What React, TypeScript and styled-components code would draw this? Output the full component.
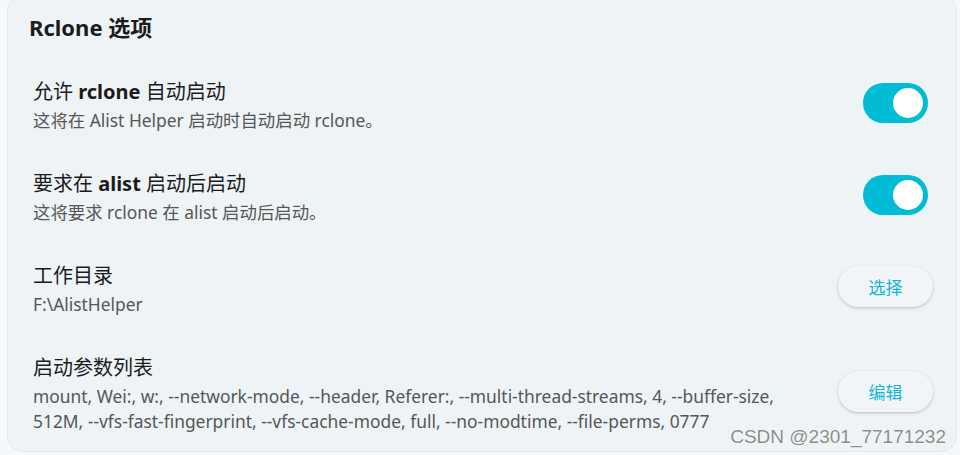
import styled, { createGlobalStyle } from "styled-components";

const GlobalStyle = createGlobalStyle`
  html, body {
    margin: 0;
    padding: 0;
    background: #f6f9fb;
    font-family: "Noto Sans", "Noto Sans CJK SC", sans-serif;
    overflow: hidden;
  }
`;

const Page = styled.div`
  position: relative;
  width: 960px;
  height: 455px;
  padding: 0 3px 0 7px;
  box-sizing: border-box;
  overflow: hidden;
`;

const Card = styled.section`
  margin-top: -6px;
  height: 458px;
  box-sizing: border-box;
  background: #eef3f6;
  border: 1px solid #e4e9ed;
  border-radius: 16px;
  padding: 17px 23px 18px 21px;
  display: flex;
  flex-direction: column;
  gap: 36px;
`;

const CardTitle = styled.h2`
  margin: 0;
  font-size: 22px;
  line-height: 30px;
  font-weight: 700;
  color: #1b1b1b;
`;

const List = styled.div`
  display: flex;
  flex-direction: column;
  gap: 37px;
  padding-left: 4px;
`;

const Row = styled.div`
  display: flex;
  align-items: center;
  justify-content: space-between;
  gap: 30px;
`;

const Text = styled.div`
  flex: 1;
  min-width: 0;
`;

const Label = styled.div`
  font-size: 20px;
  line-height: 28px;
  color: #1b1b1b;

  b {
    font-weight: 700;
  }
`;

const Hint = styled.div`
  margin-top: 2px;
  font-size: 17.4px;
  line-height: 25px;
  color: #565656;
`;

const Switch = styled.div<{ $on: boolean }>`
  width: 65px;
  height: 40px;
  border-radius: 20px;
  margin: 0 5px 6px 0;
  box-sizing: border-box;
  padding: 5px;
  background: ${(p) => (p.$on ? "#00bcd4" : "#c9d1d6")};
  display: flex;
  justify-content: ${(p) => (p.$on ? "flex-end" : "flex-start")};
  flex-shrink: 0;

  &::after {
    content: "";
    width: 30px;
    height: 30px;
    border-radius: 50%;
    background: #ffffff;
  }
`;

const PillButton = styled.button`
  width: 95px;
  height: 41px;
  margin-bottom: 6px;
  flex-shrink: 0;
  border: none;
  border-radius: 21px;
  background: #f1f5f8;
  box-shadow: 0 1px 3px rgba(0, 0, 0, 0.22);
  color: #12b8d2;
  font-family: inherit;
  font-size: 17px;
  cursor: pointer;
`;

const Watermark = styled.div`
  position: absolute;
  right: 14px;
  bottom: 7px;
  font-family: "Liberation Sans", Arial, sans-serif;
  font-size: 19px;
  color: #8c8c8c;
  text-shadow: 0 0 2px #ffffff, 0 0 1px #ffffff;
  pointer-events: none;
`;

const args = [
  "mount",
  "Wei:",
  "w:",
  "--network-mode",
  "--header",
  "Referer:",
  "--multi-thread-streams",
  "4",
  "--buffer-size",
  "512M",
  "--vfs-fast-fingerprint",
  "--vfs-cache-mode",
  "full",
  "--no-modtime",
  "--file-perms",
  "0777",
];

export default function App() {
  return (
    <Page>
      <GlobalStyle />
      <Card>
        <CardTitle>Rclone 选项</CardTitle>
        <List>
          <Row>
            <Text>
              <Label>
                允许 <b>rclone</b> 自动启动
              </Label>
              <Hint>这将在 Alist Helper 启动时自动启动 rclone。</Hint>
            </Text>
            <Switch $on />
          </Row>
          <Row>
            <Text>
              <Label>
                要求在 <b>alist</b> 启动后启动
              </Label>
              <Hint>这将要求 rclone 在 alist 启动后启动。</Hint>
            </Text>
            <Switch $on />
          </Row>
          <Row>
            <Text>
              <Label>工作目录</Label>
              <Hint>F:\AlistHelper</Hint>
            </Text>
            <PillButton>选择</PillButton>
          </Row>
          <Row>
            <Text>
              <Label>启动参数列表</Label>
              <Hint>{args.join(", ")}</Hint>
            </Text>
            <PillButton>编辑</PillButton>
          </Row>
        </List>
      </Card>
      <Watermark>CSDN @2301_77171232</Watermark>
    </Page>
  );
}
